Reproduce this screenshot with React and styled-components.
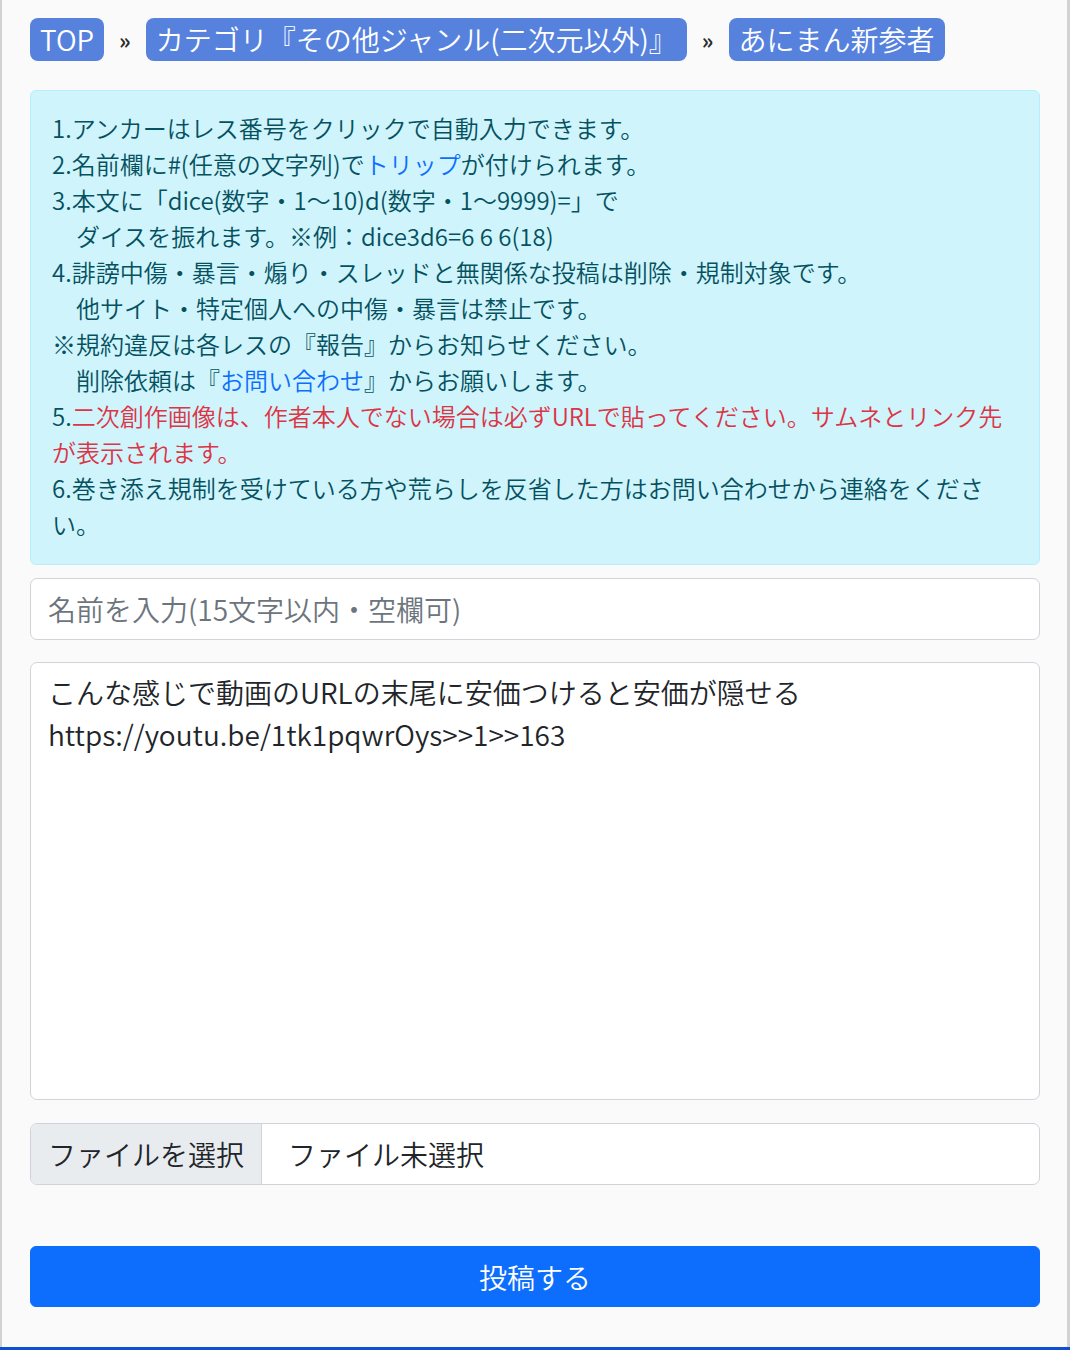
import React from "react";
import styled, { createGlobalStyle } from "styled-components";

const FONT = `"Noto Sans CJK JP", "Noto Sans", sans-serif`;

const GlobalStyle = createGlobalStyle`
  html, body {
    margin: 0;
    padding: 0;
    background: #fafafa;
  }
  body {
    font-family: ${FONT};
    font-weight: 350;
    color: #212529;
  }
  * {
    box-sizing: border-box;
  }
`;

const IND = "\u3000";

const App = () => {
  return (
    <>
      <GlobalStyle />
      <Wrapper>
        <Breadcrumb>
          <Crumb>TOP</Crumb>
          <Sep>»</Sep>
          <Crumb>カテゴリ『その他ジャンル(二次元以外)』</Crumb>
          <Sep>»</Sep>
          <Crumb>あにまん新参者</Crumb>
        </Breadcrumb>

        <Notice>
          <Line>1.アンカーはレス番号をクリックで自動入力できます。</Line>
          <Line>
            2.名前欄に#(任意の文字列)で<Link>トリップ</Link>が付けられます。
          </Line>
          <Line>3.本文に「dice(数字・1〜10)d(数字・1〜9999)=」で</Line>
          <Line>{IND}ダイスを振れます。※例：dice3d6=6 6 6(18)</Line>
          <Line>4.誹謗中傷・暴言・煽り・スレッドと無関係な投稿は削除・規制対象です。</Line>
          <Line>{IND}他サイト・特定個人への中傷・暴言は禁止です。</Line>
          <Line>※規約違反は各レスの『報告』からお知らせください。</Line>
          <Line>
            {IND}削除依頼は『<Link>お問い合わせ</Link>』からお願いします。
          </Line>
          <Line>
            5.<Warn>二次創作画像は、作者本人でない場合は必ずURLで貼ってください。サムネとリンク先が表示されます。</Warn>
          </Line>
          <Line>6.巻き添え規制を受けている方や荒らしを反省した方はお問い合わせから連絡をください。</Line>
        </Notice>

        <Form onSubmit={(e) => e.preventDefault()}>
          <NameInput type="text" placeholder="名前を入力(15文字以内・空欄可)" />
          <Body
            readOnly
            value={"こんな感じで動画のURLの末尾に安価つけると安価が隠せる\nhttps://youtu.be/1tk1pqwrOys>>1>>163"}
          />
          <FilePicker>
            <FileButton>ファイルを選択</FileButton>
            <FileName>ファイル未選択</FileName>
          </FilePicker>
          <Submit type="submit">投稿する</Submit>
        </Form>
      </Wrapper>
      <BottomBar />
    </>
  );
};

const Wrapper = styled.main`
  background: #fafafa;
  border-left: 2px solid #d2d2d2;
  border-right: 3px solid #d2d2d2;
  padding: 18px 27px 40px 28px;
`;

const Breadcrumb = styled.nav`
  display: flex;
  align-items: center;
  gap: 15px;
`;

const Crumb = styled.a`
  display: inline-block;
  background: #5682de;
  color: #fff;
  font-size: 28px;
  line-height: 43px;
  height: 43px;
  padding: 0 10px;
  border-radius: 8px;
  white-space: nowrap;
`;

const Sep = styled.span`
  font-size: 22px;
  font-weight: bold;
  color: #2b2b2b;
  line-height: 43px;
`;

const Notice = styled.div`
  margin-top: 29px;
  background: #cff4fc;
  border: 1px solid #b6effb;
  border-radius: 6px;
  padding: 19px 21px 22px;
  color: #055160;
  font-size: 24px;
  line-height: 36px;
`;

const Line = styled.div`
  margin: 0;
`;

const Link = styled.span`
  color: #0d6efd;
`;

const Warn = styled.span`
  color: #dc3545;
`;

const Form = styled.form`
  margin-top: 13px;
  display: flex;
  flex-direction: column;
`;

const fieldBase = `
  width: 100%;
  font-family: ${FONT};
  font-weight: 350;
  font-size: 28px;
  line-height: 42px;
  color: #212529;
  background: #fff;
  border: 1px solid #ced4da;
  border-radius: 7px;
  outline: none;
`;

const NameInput = styled.input`
  ${fieldBase}
  height: 62px;
  padding: 9px 17px;

  &::placeholder {
    color: #6c757d;
  }
`;

const Body = styled.textarea`
  ${fieldBase}
  margin-top: 22px;
  height: 438px;
  padding: 8px 17px 10px;
  resize: none;
  overflow: hidden;
`;

const FilePicker = styled.label`
  ${fieldBase}
  margin-top: 23px;
  height: 62px;
  display: flex;
  align-items: stretch;
  overflow: hidden;
`;

const FileButton = styled.span`
  background: #e9ecef;
  border-right: 1px solid #ced4da;
  padding: 9px 17px;
  white-space: nowrap;
`;

const FileName = styled.span`
  padding: 9px 26px;
  white-space: nowrap;
`;

const Submit = styled.button`
  margin-top: 61px;
  width: 100%;
  height: 61px;
  background: #0d6efd;
  color: #fff;
  border: 1px solid #0d6efd;
  border-radius: 6px;
  font-family: ${FONT};
  font-weight: 350;
  font-size: 28px;
  line-height: 42px;
  padding: 8px 12px;
  cursor: pointer;
`;

const BottomBar = styled.footer`
  height: 60px;
  background: #0f4fcf;
`;

export default App;
